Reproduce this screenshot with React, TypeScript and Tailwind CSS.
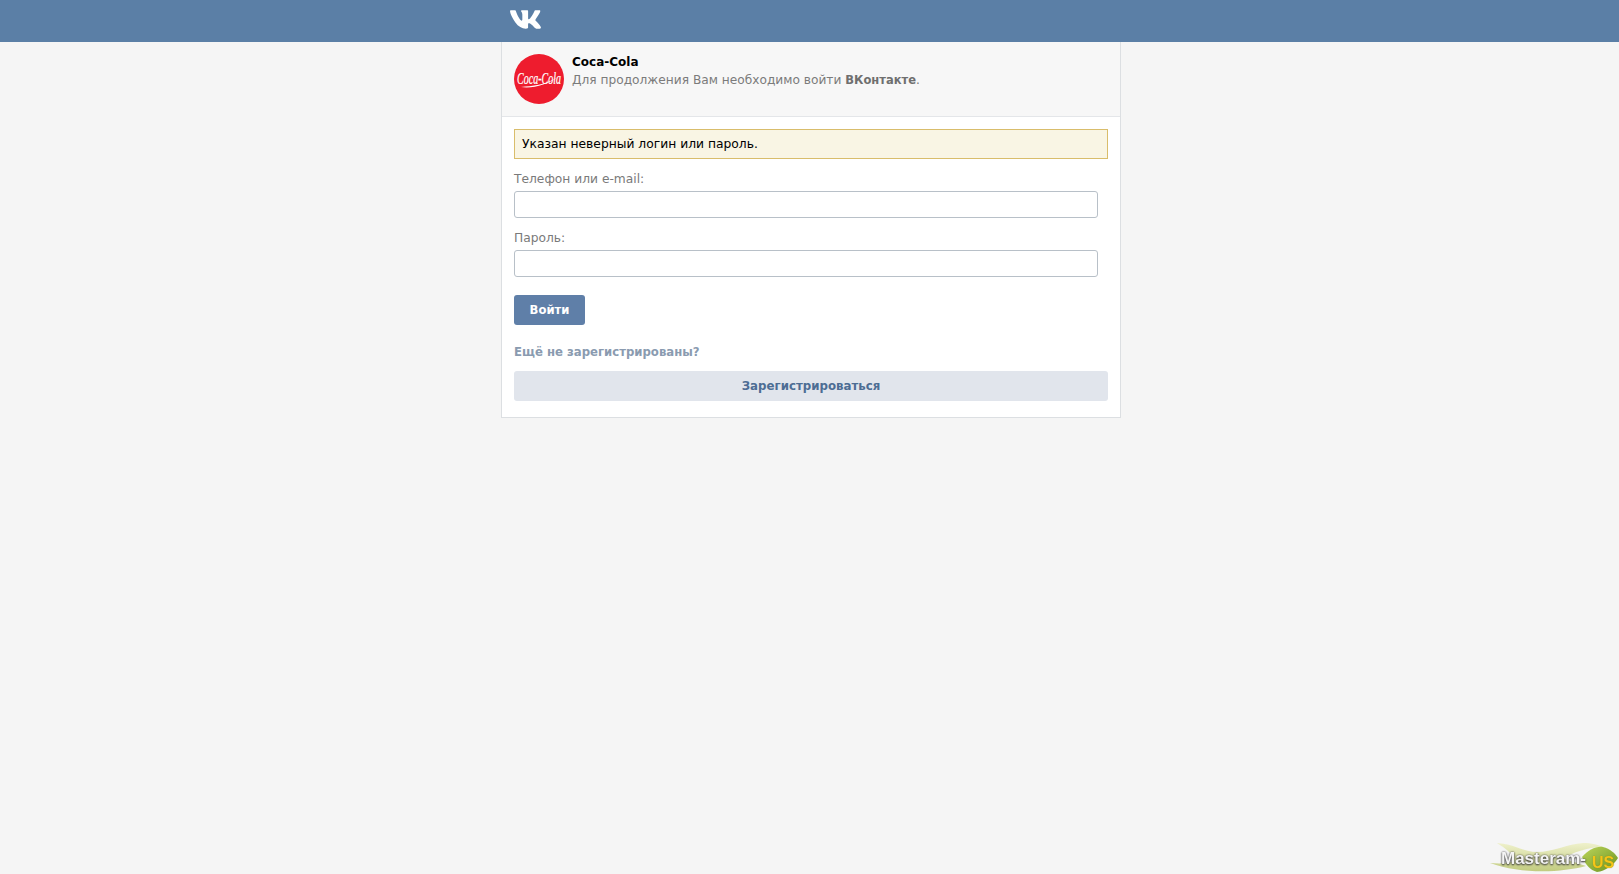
import { FaVk } from "react-icons/fa";

function CocaCola() {
  return (
    <svg width="50" height="50" viewBox="0 0 50 50" className="shrink-0">
      <circle cx="25" cy="25" r="25" fill="#ee1c2e" />
      <text transform="translate(25 30) scale(1 1.6)" textAnchor="middle" fill="#fff" stroke="#fff" strokeWidth="0.15" fontFamily="'Liberation Serif', serif" fontStyle="italic" fontSize="10">Coca-Cola</text>
      <path d="M7 33 C 18 32, 31 31, 44 23 C 34 30, 19 35, 7 33 Z" fill="#fff" />
    </svg>
  );
}

function Watermark() {
  return (
    <div className="fixed right-0 bottom-0 w-[129px] h-[34px]">
      <svg width="129" height="34" viewBox="0 0 129 34" className="absolute inset-0">
        <defs>
          <linearGradient id="leaf" x1="0" y1="0" x2="0" y2="1">
            <stop offset="0" stopColor="#eef0c4" />
            <stop offset="1" stopColor="#b8c46a" />
          </linearGradient>
          <linearGradient id="tip" x1="0" y1="0" x2="1" y2="1">
            <stop offset="0" stopColor="#bcd45a" />
            <stop offset="1" stopColor="#6b9420" />
          </linearGradient>
        </defs>
        <path d="M7 3 C 24 4, 34 12, 47 12 C 62 12, 78 4, 93 3 C 102 3, 108 5, 113 7 C 96 7, 84 13, 72 18 L 96 26 C 70 33, 30 34, 0 23 C 14 24, 22 23, 24 20 C 22 13, 15 8, 7 3 Z" fill="url(#leaf)" opacity="0.85" />
        <path d="M92 17 C 98 10, 106 6, 113 7 C 120 9, 125 13, 128 18 C 124 25, 115 31, 107 32 C 100 30, 96 25, 92 17 Z" fill="url(#tip)" />
      </svg>
      <span className="absolute left-[11px] top-[10px] text-[17px] leading-[18px] font-bold text-[#f4f4f4] font-['Liberation_Sans',sans-serif] [text-shadow:0_0_2px_#444,0_1px_2px_#333]">Masteram-</span>
      <span className="absolute left-[102px] top-[15px] text-[16px] leading-[16px] font-bold text-[#f5c518] font-['Liberation_Sans',sans-serif] [text-shadow:0_0_1px_#6a7a20]">US</span>
    </div>
  );
}

export default function App() {
  return (
    <div className="min-h-screen bg-[#f5f5f5] font-['DejaVu_Sans',Verdana,sans-serif] text-[12.25px] leading-[16px]">
      <header className="h-[42px] bg-[#5b7fa6] flex justify-center pl-[3px]">
        <div className="w-[620px] pl-[8px] flex items-start">
          <FaVk className="text-white w-[33px] h-[33px] mt-[3px]" />
        </div>
      </header>
      <div className="flex justify-center pl-[3px]">
        <main className="w-[620px] bg-white border border-t-0 border-[#dcdfe2]">
          <section className="h-[75px] bg-[#f7f7f7] border-b border-[#e4e6e9] pl-[12px] pt-[12px] flex gap-[8px]">
            <CocaCola />
            <div className="-mt-[2px]">
              <div className="font-bold text-black leading-[20px] text-[12px]">Coca-Cola</div>
              <div className="text-[#7b7b7b] text-[12.2px] leading-[16px]">
                Для продолжения Вам необходимо войти <b className="font-bold text-[11.5px] text-[#6f6f6f]">ВКонтакте</b>.
              </div>
            </div>
          </section>
          <section className="px-[12px] pt-[12px] pb-[16px]">
            <div className="h-[30px] bg-[#f9f5e4] border border-[#d9bd6b] pl-[7px] flex items-center text-black text-[12.3px]">
              Указан неверный логин или пароль.
            </div>
            <label className="block mt-[12px] mb-[5px] h-[15px] text-[#7a7a7a]">Телефон или e-mail:</label>
            <input className="block w-[584px] h-[27px] bg-white border border-[#b8c0c8] rounded-[3px]" />
            <label className="block mt-[12px] mb-[5px] h-[15px] text-[#7a7a7a]">Пароль:</label>
            <input type="password" className="block w-[584px] h-[27px] bg-white border border-[#b8c0c8] rounded-[3px]" />
            <button className="block mt-[18px] w-[71px] h-[30px] bg-[#5f7fa8] rounded-[3px] text-white font-bold text-[11.6px]">Войти</button>
            <div className="mt-[19px] h-[16px] font-bold text-[11.7px] text-[#8a9bb0]">Ещё не зарегистрированы?</div>
            <button className="block mt-[11px] w-full h-[30px] bg-[#e1e5ec] rounded-[3px] text-[#4d6d94] font-bold text-[11.8px]">Зарегистрироваться</button>
          </section>
        </main>
      </div>
      <Watermark />
    </div>
  );
}
